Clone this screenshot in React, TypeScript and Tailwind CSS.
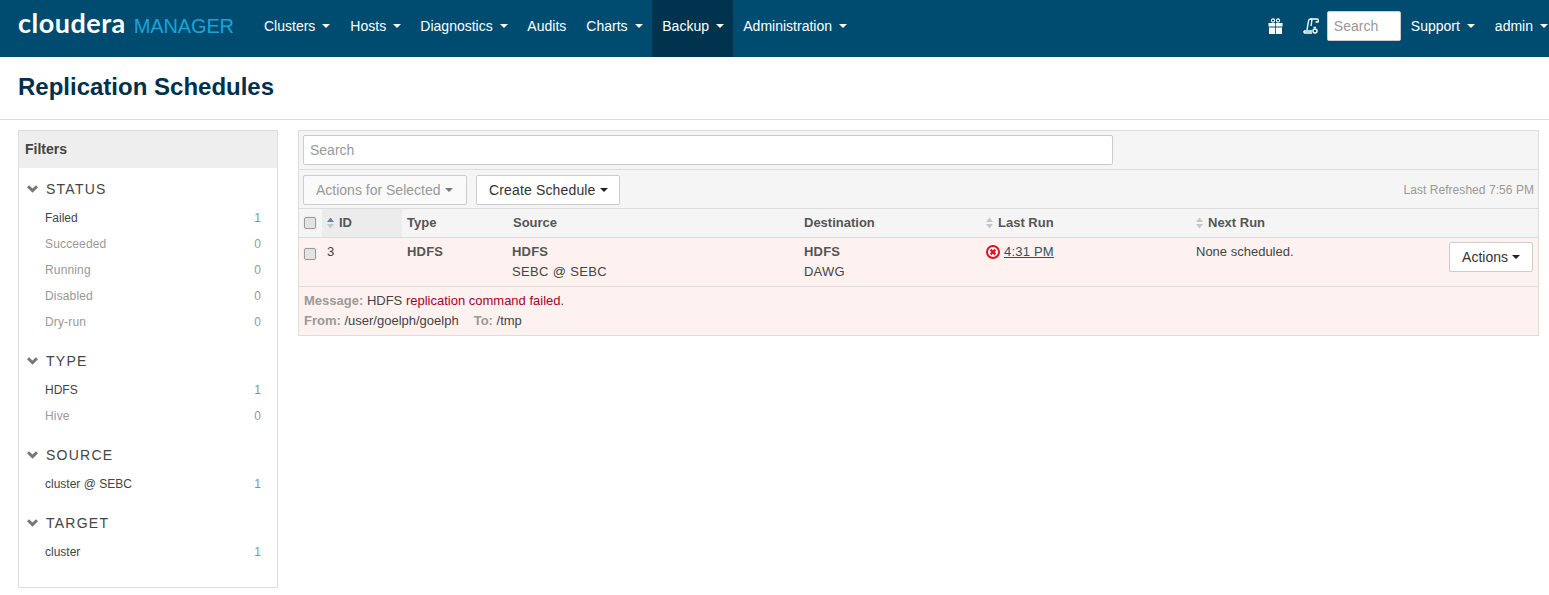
const sans = 'font-["Liberation_Sans",Arial,sans-serif]';

function Caret({ className = 'border-t-white' }: { className?: string }) {
  return <span className={`inline-block w-0 h-0 border-x-4 border-x-transparent border-t-4 ${className}`} />;
}

function NavItem({ label, caret = true, active = false, className = '' }: { label: string; caret?: boolean; active?: boolean; className?: string }) {
  return (
    <div className={`flex items-center gap-[7px] h-[57px] pb-[5px] px-[10px] text-[14px] text-white ${active ? 'bg-[#00334e]' : ''} ${className}`}>
      {label}
      {caret && <Caret />}
    </div>
  );
}

function SortArrows({ up = '#c4c8cc' }: { up?: string }) {
  return (
    <svg width="7" height="12" viewBox="0 0 7 12" className="shrink-0">
      <path d="M3.5 0.5 L7 5 H0 Z" fill={up} />
      <path d="M3.5 11.5 L7 7 H0 Z" fill="#c4c8cc" />
    </svg>
  );
}

function Checkbox() {
  return <span className="block w-[12px] h-[12px] rounded-[2px] border border-[#9a9a9a] bg-[#e3e3e3] shadow-[0_0_0_1px_#eee]" />;
}

type Facet = { title: string; items: { label: string; count: number }[] };

const facets: Facet[] = [
  {
    title: 'STATUS',
    items: [
      { label: 'Failed', count: 1 },
      { label: 'Succeeded', count: 0 },
      { label: 'Running', count: 0 },
      { label: 'Disabled', count: 0 },
      { label: 'Dry-run', count: 0 },
    ],
  },
  { title: 'TYPE', items: [{ label: 'HDFS', count: 1 }, { label: 'Hive', count: 0 }] },
  { title: 'SOURCE', items: [{ label: 'cluster @ SEBC', count: 1 }] },
  { title: 'TARGET', items: [{ label: 'cluster', count: 1 }] },
];

function FilterGroup({ facet }: { facet: Facet }) {
  return (
    <div className="mb-[13px]">
      <div className="flex items-center h-[26px] pl-[8px]">
        <svg width="11" height="8" viewBox="0 0 13 9" className="shrink-0">
          <path d="M0 2.4 L2.4 0 L6.5 4 L10.6 0 L13 2.4 L6.5 8.8 Z" fill="#777" />
        </svg>
        <span className="ml-[8px] text-[14px] tracking-[1.25px] text-[#444]">{facet.title}</span>
      </div>
      <div className="mt-[3px]">
        {facet.items.map((item) => (
          <div key={item.label} className="flex items-center justify-between h-[26px] pl-[26px] pr-[16px] text-[12px]">
            <span className={item.count > 0 ? 'text-[#444]' : 'text-[#999] tracking-[0.15px]'}>{item.label}</span>
            <span className={item.count > 0 ? 'text-[#6f98a8]' : 'text-[#999]'}>{item.count}</span>
          </div>
        ))}
      </div>
    </div>
  );
}

const cols = 'grid grid-cols-[23px_80px_106px_291px_181px_211px_1fr]';

export default function App() {
  return (
    <div className={`${sans} w-[1549px] h-[595px] overflow-hidden bg-white text-[13px] text-[#333]`}>
      {/* Top nav */}
      <header className="flex items-center h-[57px] bg-[#004c70]">
        <div className="flex items-baseline w-[254px] pl-[18px] pb-[13px]">
          <span className="font-['Lato',sans-serif] font-bold text-[27px] leading-none tracking-[0.5px] text-white">cloudera</span>
          <span className="ml-[8px] text-[20px] leading-none tracking-[-0.15px] text-[#1ba3d9]">MANAGER</span>
        </div>
        <NavItem label="Clusters" />
        <NavItem label="Hosts" className="w-[70px]" />
        <NavItem label="Diagnostics" className="w-[107px]" />
        <NavItem label="Audits" caret={false} />
        <NavItem label="Charts" className="w-[76px]" />
        <NavItem label="Backup" active className="w-[81px]" />
        <NavItem label="Administration" />

        <div className="ml-auto flex items-center">
          <svg width="15" height="16" viewBox="0 0 15 16" className="mb-[5px] mr-[20px]" fill="white">
            <path d="M0.5 5 H14.5 V8.5 H0.5 Z M1 9.5 H14 V16 H1 Z" />
            <circle cx="5" cy="2.5" r="1.6" fill="none" stroke="white" strokeWidth="1.1" />
            <circle cx="10" cy="2.5" r="1.6" fill="none" stroke="white" strokeWidth="1.1" />
            <path d="M7.1 5 H7.9 V16 H7.1 Z" fill="#004c70" />
          </svg>
          <svg width="17" height="17" viewBox="0 0 17 17" className="mb-[5px] mr-[7px]" fill="none" stroke="white" strokeWidth="1.4">
            <path d="M4 12 L5.5 3 C5.7 1.7 6.5 1 7.5 1 H14 C15 1 15.5 1.8 15.3 3 L15 4 H12.5" />
            <path d="M7.5 1 C8.8 1 9 2 8.8 3 L8 8" />
            <path d="M1 13 H9 M1 13 C0.8 14 1 15 2 15 H9" />
            <circle cx="12" cy="13" r="2" />
            <path d="M10.5 9.5 H13" />
          </svg>
          <div className="flex items-center w-[74px] h-[30px] mb-[5px] pl-[6px] bg-white border border-[#ccc] rounded-[2px] text-[14px] text-[#999]">Search</div>
          <NavItem label="Support" />
          <NavItem label="admin" className="pr-[1px]" />
        </div>
      </header>

      {/* Page title */}
      <div className="flex items-center h-[63px] pl-[18px] border-b border-[#ddd]">
        <h1 className="text-[24px] font-bold leading-none mt-[-2px] text-[#00304a]">Replication Schedules</h1>
      </div>

      <div className="flex items-start gap-[20px] pt-[10px] pl-[18px] pr-[10px]">
        {/* Filters */}
        <aside className="w-[260px] h-[458px] shrink-0 border border-[#ddd]">
          <div className="flex items-center h-[37px] pl-[6px] bg-[#eee] text-[14px] font-bold text-[#444]">Filters</div>
          <div className="pt-[8px]">
            {facets.map((f) => (
              <FilterGroup key={f.title} facet={f} />
            ))}
          </div>
        </aside>

        {/* Schedules */}
        <main className="flex-1 border border-[#ddd]">
          <div className="h-[39px] pt-[4px] pl-[4px] bg-[#f5f5f5] border-b border-[#ddd]">
            <div className="flex items-center w-[810px] h-[30px] pl-[6px] bg-white border border-[#ccc] rounded-[2px] text-[14px] text-[#999]">Search</div>
          </div>
          <div className="flex items-center h-[39px] pt-[1px] px-[4px] bg-[#f5f5f5] border-b border-[#ddd]">
            <div className="flex items-center gap-[4px] w-[164px] h-[30px] pl-[12px] pt-[1px] bg-[#fafafa] border border-[#ccc] rounded-[2px] text-[14px] text-[#999]">
              Actions for Selected <Caret className="border-t-[#777]" />
            </div>
            <div className="flex items-center gap-[4px] w-[144px] h-[30px] pl-[12px] pt-[1px] ml-[9px] bg-white border border-[#ccc] rounded-[2px] text-[14px] tracking-[0.15px] text-[#333]">
              Create Schedule <Caret className="border-t-[#222]" />
            </div>
            <span className="ml-auto text-[12px] tracking-[0.05px] text-[#999]">Last Refreshed 7:56 PM</span>
          </div>

          {/* Header row */}
          <div className={`${cols} h-[29px] items-center bg-[#f5f5f5] border-b border-[#ddd] font-bold text-[#555]`}>
            <div className="pl-[5px]"><Checkbox /></div>
            <div className="flex items-center gap-[5px] h-full pl-[5px] bg-[#ececec]"><SortArrows up="#6d8296" />ID</div>
            <div className="pl-[5px]">Type</div>
            <div className="pl-[5px]">Source</div>
            <div className="pl-[5px]">Destination</div>
            <div className="flex items-center gap-[5px] pl-[6px]"><SortArrows />Last Run</div>
            <div className="flex items-center gap-[5px] pl-[5px]"><SortArrows />Next Run</div>
          </div>

          {/* Failed schedule */}
          <div className="bg-[#fdf2f0]">
            <div className={`${cols} h-[49px] border-b border-[#ddd] leading-[20px] tracking-[0.2px]`}>
              <div className="pl-[5px] pt-[10px]"><Checkbox /></div>
              <div className="pl-[5px] pt-[4px] text-[#444]">3</div>
              <div className="pl-[5px] pt-[4px] font-bold text-[#555]">HDFS</div>
              <div className="pl-[4px] pt-[4px] text-[#444]">
                <div className="font-bold text-[#555]">HDFS</div>
                <div className="tracking-[0.35px]">SEBC @ SEBC</div>
              </div>
              <div className="pl-[5px] pt-[4px] text-[#444]">
                <div className="font-bold text-[#555]">HDFS</div>
                <div>DAWG</div>
              </div>
              <div className="flex items-start gap-[4px] pl-[6px] pt-[4px]">
                <svg width="14" height="14" viewBox="0 0 14 14" className="mt-[3px] shrink-0">
                  <circle cx="7" cy="7" r="6" fill="white" stroke="#e0101c" strokeWidth="2" />
                  <path d="M4.6 4.6 L9.4 9.4 M9.4 4.6 L4.6 9.4" stroke="#e0101c" strokeWidth="2.2" />
                </svg>
                <span className="underline text-[#33505f]">4:31 PM</span>
              </div>
              <div className="flex items-start justify-between pl-[5px] pt-[4px] pr-[5px] text-[#444]">
                <span className="tracking-normal">None scheduled.</span>
                <div className="flex items-center gap-[4px] h-[30px] px-[12px] bg-white border border-[#ccc] rounded-[2px] text-[14px] tracking-normal text-[#333]">
                  Actions <Caret className="border-t-[#222]" />
                </div>
              </div>
            </div>
            <div className="h-[48px] pl-[5px] pt-[4px] leading-[20px] text-[#444]">
              <div>
                <span className="font-bold text-[#999]">Message: </span>
                <span className="text-[#a8002b]"><span className="text-[#444]">HDFS</span> replication command failed.</span>
              </div>
              <div>
                <span className="font-bold text-[#999]">From: </span>/user/goelph/goelph
                <span className="font-bold text-[#999] ml-[15px]">To: </span>/tmp
              </div>
            </div>
          </div>
        </main>
      </div>
    </div>
  );
}
